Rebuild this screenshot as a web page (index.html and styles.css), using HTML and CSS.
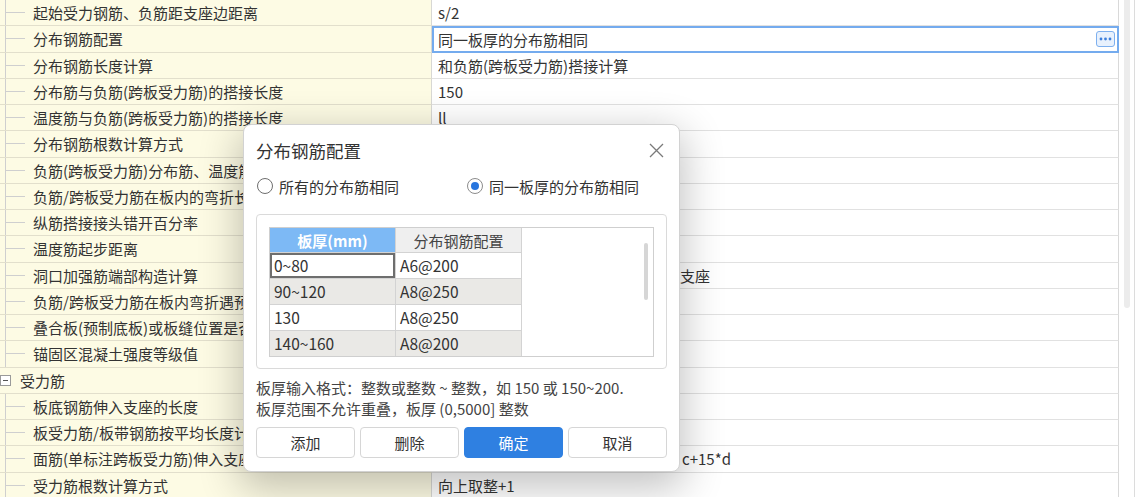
FILE: index.html
```html
<!DOCTYPE html>
<html lang="zh-CN">
<head>
<meta charset="utf-8">
<title>分布钢筋配置</title>
<link rel="stylesheet" href="styles.css">
</head>
<body>
<div class="page">
  <div class="grid">
    <div class="row"><div class="name"><span class="tree"></span><span class="label">起始受力钢筋、负筋距支座边距离</span></div><div class="val">s/2</div></div>
    <div class="row"><div class="name"><span class="tree"></span><span class="label">分布钢筋配置</span></div><div class="val sel"><span>同一板厚的分布筋相同</span><span class="more"><svg width="13" height="4" viewBox="0 0 13 4"><circle cx="2" cy="2" r="1.4" fill="#3d7fdc"/><circle cx="6.5" cy="2" r="1.4" fill="#3d7fdc"/><circle cx="11" cy="2" r="1.4" fill="#3d7fdc"/></svg></span></div></div>
    <div class="row"><div class="name"><span class="tree"></span><span class="label">分布钢筋长度计算</span></div><div class="val">和负筋(跨板受力筋)搭接计算</div></div>
    <div class="row"><div class="name"><span class="tree"></span><span class="label">分布筋与负筋(跨板受力筋)的搭接长度</span></div><div class="val">150</div></div>
    <div class="row"><div class="name"><span class="tree"></span><span class="label">温度筋与负筋(跨板受力筋)的搭接长度</span></div><div class="val">ll</div></div>
    <div class="row"><div class="name"><span class="tree"></span><span class="label">分布钢筋根数计算方式</span></div><div class="val"></div></div>
    <div class="row"><div class="name"><span class="tree"></span><span class="label">负筋(跨板受力筋)分布筋、温度筋是否带弯勾</span></div><div class="val"></div></div>
    <div class="row"><div class="name"><span class="tree"></span><span class="label">负筋/跨板受力筋在板内的弯折长度</span></div><div class="val"></div></div>
    <div class="row"><div class="name"><span class="tree"></span><span class="label">纵筋搭接接头错开百分率</span></div><div class="val"></div></div>
    <div class="row"><div class="name"><span class="tree"></span><span class="label">温度筋起步距离</span></div><div class="val"></div></div>
    <div class="row"><div class="name"><span class="tree"></span><span class="label">洞口加强筋端部构造计算</span></div><div class="val"><span class="tail">支座</span></div></div>
    <div class="row"><div class="name"><span class="tree"></span><span class="label">负筋/跨板受力筋在板内弯折遇预制板时</span></div><div class="val"></div></div>
    <div class="row"><div class="name"><span class="tree"></span><span class="label">叠合板(预制底板)或板缝位置是否计算</span></div><div class="val"></div></div>
    <div class="row"><div class="name"><span class="tree"></span><span class="label">锚固区混凝土强度等级值</span></div><div class="val"></div></div>
    <div class="row"><div class="name"><span class="toggle"><span class="minus"></span></span><span class="label">受力筋</span></div><div class="val"></div></div>
    <div class="row"><div class="name"><span class="tree"></span><span class="label">板底钢筋伸入支座的长度</span></div><div class="val"></div></div>
    <div class="row"><div class="name"><span class="tree"></span><span class="label">板受力筋/板带钢筋按平均长度计算</span></div><div class="val"></div></div>
    <div class="row"><div class="name"><span class="tree"></span><span class="label">面筋(单标注跨板受力筋)伸入支座的锚固长度</span></div><div class="val"><span class="tail tail2">c+15*d</span></div></div>
    <div class="row"><div class="name"><span class="tree"></span><span class="label">受力筋根数计算方式</span></div><div class="val">向上取整+1</div></div>
  </div>
  <div class="vbar">
    <div class="thumb"></div>
    <div class="vline"></div>
  </div>
</div>

<div class="dialog">
  <div class="dlg-head">
    <span class="dlg-title">分布钢筋配置</span>
    <svg class="close" width="15" height="15" viewBox="0 0 15 15"><path d="M1 1 L14 14 M14 1 L1 14" stroke="#7a7a7a" stroke-width="1.3" fill="none"/></svg>
  </div>
  <div class="radios">
    <label class="radio"><span class="circle"></span><span>所有的分布筋相同</span></label>
    <label class="radio"><span class="circle on"><span class="dot"></span></span><span>同一板厚的分布筋相同</span></label>
  </div>
  <div class="frame">
    <div class="tbl">
      <div class="tgrid">
        <div class="th th-key">板厚(mm)</div>
        <div class="th">分布钢筋配置</div>
        <div class="td cur">0~80</div>
        <div class="td">A6@200</div>
        <div class="td alt">90~120</div>
        <div class="td alt">A8@250</div>
        <div class="td">130</div>
        <div class="td">A8@250</div>
        <div class="td alt">140~160</div>
        <div class="td alt">A8@200</div>
      </div>
      <div class="tspace"><div class="tthumb"></div></div>
    </div>
  </div>
  <div class="hint">
    <div>板厚输入格式：整数或整数 ~ 整数，如 150 或 150~200.</div>
    <div>板厚范围不允许重叠，板厚 (0,5000] 整数</div>
  </div>
  <div class="btns">
    <button class="btn">添加</button>
    <button class="btn">删除</button>
    <button class="btn primary">确定</button>
    <button class="btn">取消</button>
  </div>
</div>
</body>
</html>
```

FILE: styles.css
```css
* { box-sizing: border-box; }

body {
  margin: 0;
  width: 1141px;
  height: 497px;
  overflow: hidden;
  position: relative;
  background: #ffffff;
  color: #333333;
  font-family: "Noto Sans CJK SC", "Noto Sans", sans-serif;
  font-size: 15px;
}

.page {
  display: flex;
  height: 497px;
  overflow: hidden;
}

.grid {
  width: 1119px;
  display: flex;
  flex-direction: column;
  flex: none;
}

.row {
  display: flex;
  height: 26.25px;
  flex: none;
}

.name {
  width: 432px;
  flex: none;
  display: flex;
  align-items: center;
  background: #fdfbe4;
  border-right: 1px solid #d8d8d4;
  border-bottom: 1px solid #e2dfcc;
  white-space: nowrap;
  overflow: hidden;
  line-height: 1;
}

.tree {
  width: 25px;
  height: 100%;
  flex: none;
  margin-right: 8px;
  background:
    linear-gradient(#cfcfcf, #cfcfcf) 5px 0 / 1px calc(100% + 1px) no-repeat,
    linear-gradient(#cfcfcf, #cfcfcf) 6px 50% / 19px 1px no-repeat;
}

.toggle {
  width: 11px;
  height: 11px;
  flex: none;
  border: 1px solid #9a9a9a;
  background: #ffffff;
  display: flex;
  align-items: center;
  justify-content: center;
  margin-right: 9px;
}

.minus {
  width: 5px;
  height: 1px;
  background: #555555;
}

.label { color: #333333; }

.val {
  flex: 1;
  display: flex;
  align-items: center;
  padding-left: 6px;
  border-right: 1px solid #d9d9d9;
  border-bottom: 1px solid #e1e1e1;
  white-space: nowrap;
  overflow: hidden;
  line-height: 1;
}

/* visible end of a value that runs under the dialog */
.tail { margin-left: 242px; }
.tail2 { margin-left: 244px; }

.val.sel {
  border: 2px solid #74abee;
  padding-left: 4px;
  padding-right: 2px;
}

.more {
  margin-left: auto;
  width: 19px;
  height: 16px;
  border: 1.5px solid #7eb0ef;
  border-radius: 3px;
  background: #e8f1fd;
  display: flex;
  align-items: center;
  justify-content: center;
}

.vbar {
  flex: none;
  width: 22px;
  display: flex;
  padding-left: 5px;
}

.thumb {
  width: 6px;
  height: 308px;
  background: #ececec;
  border-radius: 0 0 3px 3px;
}

.vline {
  width: 1px;
  height: 100%;
  margin-left: 4px;
  background: #dcdcdc;
}

/* dialog */
.dialog {
  position: absolute;
  left: 243px;
  top: 124px;
  width: 437px;
  height: 348px;
  background: #ffffff;
  border: 1px solid #d2d2d2;
  border-radius: 8px;
  box-shadow: 0 12px 40px 4px rgba(0, 0, 0, 0.24);
  padding: 0 12px 13px;
  display: flex;
  flex-direction: column;
}

.dlg-head {
  height: 50px;
  flex: none;
  display: flex;
  align-items: center;
  justify-content: space-between;
}

.dlg-title {
  font-size: 17.5px;
  color: #333333;
}

.close { margin-right: 3px; }

.radios {
  height: 22px;
  flex: none;
  display: grid;
  grid-template-columns: 210px auto;
  align-items: center;
}

.radio {
  display: flex;
  align-items: center;
  gap: 6px;
  padding-left: 1px;
  line-height: 1;
}

.circle {
  width: 16px;
  height: 16px;
  border-radius: 50%;
  border: 1.5px solid #6e6e6e;
  background: #ffffff;
  display: flex;
  align-items: center;
  justify-content: center;
}

.circle.on { border-color: #8c8c8c; }

.dot {
  width: 8px;
  height: 8px;
  border-radius: 50%;
  background: #2775de;
}

.frame {
  margin-top: 17px;
  height: 155px;
  flex: none;
  border: 1px solid #dadada;
  border-radius: 4px;
  padding: 12px;
}

.tbl {
  height: 130px;
  border: 1px solid #cfcfcf;
  display: flex;
  overflow: hidden;
}

.tgrid {
  display: grid;
  grid-template-columns: 126px 126px;
  grid-template-rows: 25px;
  grid-auto-rows: 26px;
  flex: none;
  align-self: flex-start;
}

.th, .td {
  border-right: 1px solid #d3d3d3;
  border-bottom: 1px solid #d3d3d3;
  display: flex;
  align-items: center;
  line-height: 1;
  font-size: 15.5px;
}

.th {
  justify-content: center;
  background: #efefef;
  color: #444444;
  font-size: 15px;
}

.th-key {
  background: #7db9f5;
  color: #ffffff;
  font-weight: bold;
}

.td {
  padding-left: 4px;
  background: #ffffff;
}

.td.alt { background: #eae9e6; }

.td.cur { box-shadow: inset 0 0 0 2px #6e6e6e; }

.tspace {
  flex: 1;
  display: flex;
  justify-content: flex-end;
  align-items: flex-start;
}

.tthumb {
  width: 4px;
  height: 57px;
  margin-top: 15px;
  margin-right: 5px;
  border-radius: 2px;
  background: #d6d6d6;
}

.hint {
  margin-top: 8px;
  font-size: 15px;
  line-height: 21px;
  color: #444444;
  white-space: nowrap;
}

.btns {
  margin-top: 8px;
  display: grid;
  grid-template-columns: repeat(4, 1fr);
  gap: 5px;
  height: 31px;
  flex: none;
}

.btn {
  font-family: inherit;
  font-size: 15px;
  color: #333333;
  background: #ffffff;
  border: 1px solid #d6d6d6;
  border-radius: 4px;
  padding: 0;
}

.btn.primary {
  background: #2f80e1;
  border-color: #2f80e1;
  color: #ffffff;
}
```
